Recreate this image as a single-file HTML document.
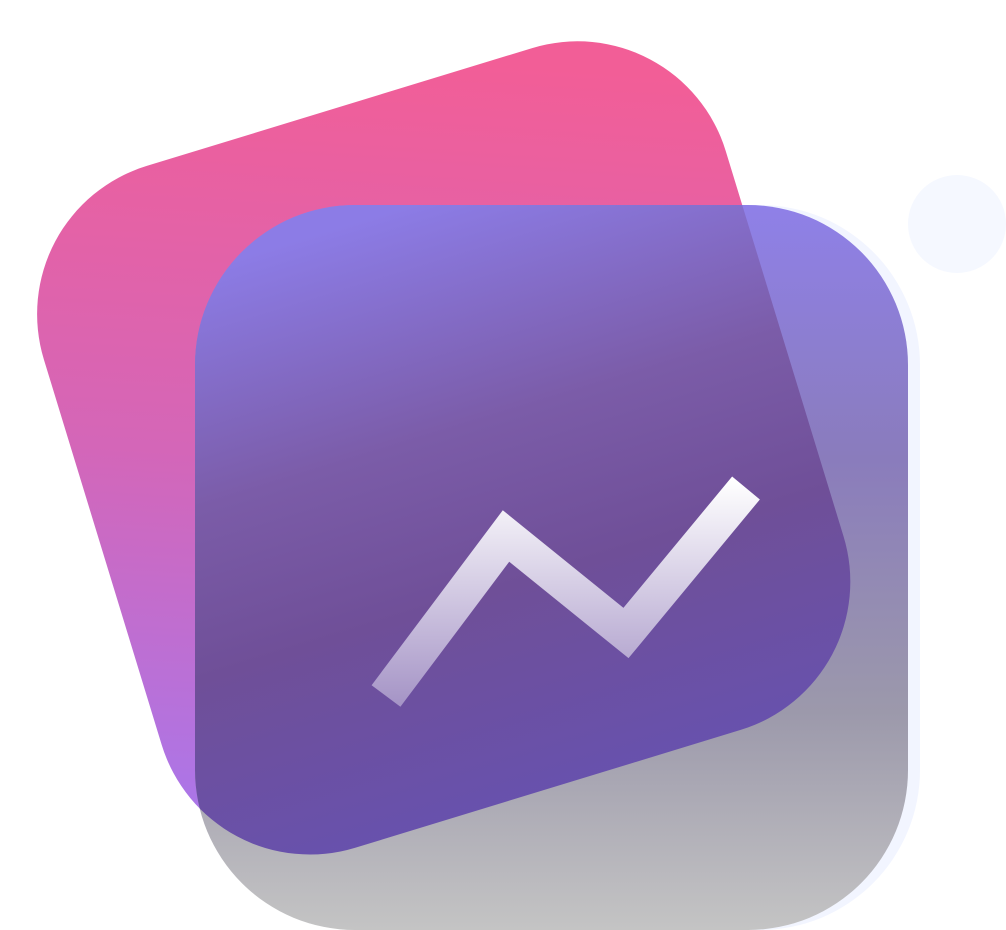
<!DOCTYPE html>
<html><head><meta charset="utf-8"><style>html,body{margin:0;padding:0;background:#fff;width:1006px;height:930px;overflow:hidden}</style></head>
<body>
<svg width="1006" height="930" viewBox="0 0 1006 930" xmlns="http://www.w3.org/2000/svg">
<defs>
<linearGradient id="pink" gradientUnits="userSpaceOnUse" x1="460" y1="40" x2="170" y2="800">
<stop offset="0" stop-color="#f25e97"/><stop offset="0.5" stop-color="#d466b8"/><stop offset="1" stop-color="#a578ef"/>
</linearGradient>
<linearGradient id="front" gradientUnits="userSpaceOnUse" x1="0" y1="205" x2="0" y2="930">
<stop offset="0" stop-color="#8f80e8"/><stop offset="0.35" stop-color="#8a7cbc"/><stop offset="0.7" stop-color="#9c99ab"/><stop offset="1" stop-color="#c4c4c4"/>
</linearGradient>
<linearGradient id="over" gradientUnits="userSpaceOnUse" x1="0" y1="205" x2="0" y2="860">
<stop offset="0" stop-color="#8c7ce6"/><stop offset="0.35" stop-color="#7b5ca8"/><stop offset="0.6" stop-color="#6f4f98"/><stop offset="1" stop-color="#6652b2"/>
</linearGradient>
<linearGradient id="arrow" gradientUnits="userSpaceOnUse" x1="0" y1="480" x2="0" y2="705">
<stop offset="0" stop-color="#ffffff"/><stop offset="1" stop-color="#a594c6"/>
</linearGradient>
<clipPath id="fc"><rect x="195" y="205" width="713" height="725" rx="160"/></clipPath>
</defs>
<circle cx="957" cy="224" r="49" fill="#f5f8ff"/>
<rect x="203" y="205" width="717" height="725" rx="160" fill="#f2f5ff"/>
<rect x="87" y="91" width="713" height="713" rx="155" fill="url(#pink)" transform="rotate(-17 445 447)"/>
<rect x="195" y="205" width="713" height="725" rx="160" fill="url(#front)"/>
<g clip-path="url(#fc)">
<rect x="87" y="91" width="713" height="713" rx="155" fill="url(#over)" transform="rotate(-17 445 447)"/>
</g>
<polyline points="386,696 506,536 626,633 746,488" fill="none" stroke="url(#arrow)" stroke-width="36" stroke-linejoin="miter"/>
</svg>
</body></html>
